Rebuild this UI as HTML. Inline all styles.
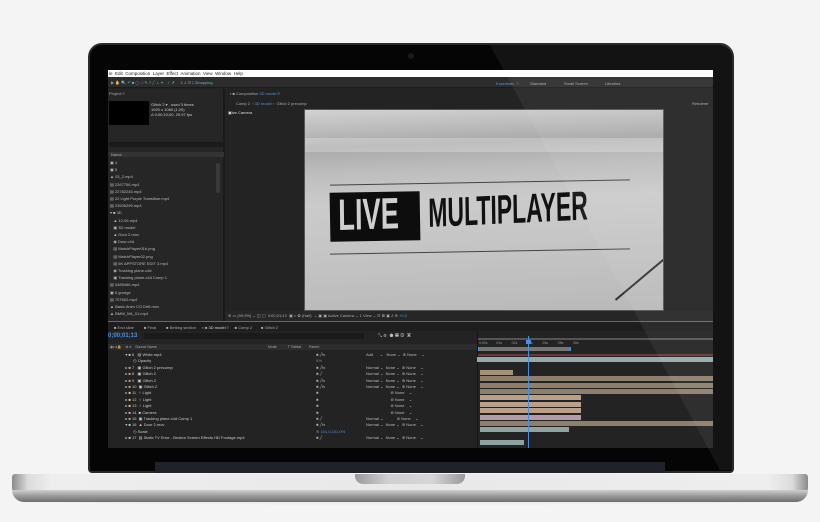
<!DOCTYPE html>
<html><head><meta charset="utf-8"><style>
*{margin:0;padding:0;box-sizing:border-box}
body{width:820px;height:522px;background:#f4f4f4;position:relative;overflow:hidden;font-family:"Liberation Sans",sans-serif}
.a{position:absolute}
.t{position:absolute;font-size:4px;color:#aaa;white-space:nowrap;line-height:5px}
.bar{position:absolute;height:5px}
</style></head><body>
<!-- base -->
<div class="a" style="left:40px;top:497px;width:740px;height:8px;background:linear-gradient(#ddd,#f2f2f2);border-radius:0 0 50% 50%"></div>
<div class="a" style="left:12px;top:474px;width:796px;height:27px;border-radius:3px 3px 14px 14px;background:linear-gradient(90deg,#8a8a8a 0,#dcdcdc 2%,#eee 5%,#e8e8e8 50%,#eee 95%,#dcdcdc 98%,#8a8a8a 100%)"></div>
<div class="a" style="left:12px;top:490px;width:796px;height:12px;border-radius:0 0 14px 14px;background:linear-gradient(#cfcfcf,#9a9a9a 50%,#6d6d6d)"></div>
<div class="a" style="left:355px;top:474px;width:110px;height:10px;border-radius:0 0 8px 8px;background:linear-gradient(90deg,#9a9a9a,#cfcfcf 30%,#d6d6d6 70%,#9a9a9a)"></div>
<!-- bezel -->
<div class="a" style="left:88px;top:43px;width:646px;height:430px;background:#050505;border-radius:14px 14px 4px 4px;border:2px solid #2a2a2a"></div>
<div class="a" style="left:155px;top:462px;width:510px;height:11px;background:#1f2228"></div>
<div class="a" style="left:408px;top:53px;width:6px;height:6px;border-radius:50%;background:#1a1a1a"></div>
<!-- screen -->
<div class="a" style="left:108px;top:70px;width:605px;height:378px;background:#232323;overflow:hidden">
 <div class="a" style="left:0;top:0;width:605px;height:7px;background:#fff"></div>
 <div class="t" style="left:1px;top:1px;color:#222;font-size:4.5px">le &nbsp;Edit &nbsp;Composition &nbsp;Layer &nbsp;Effect &nbsp;Animation &nbsp;View &nbsp;Window &nbsp;Help</div>
 <div class="a" style="left:0;top:7px;width:605px;height:11px;background:#2c2c2c;border-bottom:1px solid #1a1a1a"></div>
 <div class="t" style="left:3px;top:10px;color:#7ab">▶ ✋ 🔍 ↶ ■ ◻ &nbsp;□ ✎ T ╱ ⊥ ✦ &nbsp; ✓ ✗ &nbsp; &nbsp; ⅄ ⅄ ⊡ ☐Snapping</div>
 <div class="t" style="left:388px;top:11px;color:#5b8fd0">Essentials &nbsp;≡</div>
 <div class="t" style="left:422px;top:11px">Standard</div>
 <div class="t" style="left:456px;top:11px">Small Screen</div>
 <div class="t" style="left:497px;top:11px">Libraries</div>
 <div class="a" style="left:0;top:19px;width:117px;height:233px;background:#262626;border-right:2px solid #1a1a1a"></div>
 <div class="t" style="left:1px;top:21px">Project ≡</div>
 <div class="a" style="left:1px;top:31px;width:40px;height:24px;background:#000"></div>
 <div class="t" style="left:43px;top:32px;color:#ccc">Glitch 2 ▾ , used 3 times<br>1920 x 1080 (1,00)<br>Δ 0;00;10;00, 29,97 fps</div>
 <div class="a" style="left:1px;top:72px;width:114px;height:5px;background:#1b1b1b"></div>
 <div class="a" style="left:1px;top:82px;width:115px;height:5px;background:#333"></div>
 <div class="t" style="left:3px;top:82px">Name</div>
 <div class="t" style="left:2px;top:89px;line-height:7.2px;color:#bbb">
 ▣ 4<br>▣ 5<br>▲ 03_2.mp4<br>▤ 2267756.mp4<br>▤ 22782245.mp4<br>▤ 22 Light Purple Transition.mp4<br>▤ 23505299.mp4<br>▾ ■ 3D<br>&nbsp;&nbsp;&nbsp;▲ 12-06.mp4<br>&nbsp;&nbsp;&nbsp;▣ 3D model<br>&nbsp;&nbsp;&nbsp;▲ Door 2.mov<br>&nbsp;&nbsp;&nbsp;◉ Door.c4d<br>&nbsp;&nbsp;&nbsp;▤ MatchPlayer01b.png<br>&nbsp;&nbsp;&nbsp;▤ MatchPlayer02.png<br>&nbsp;&nbsp;&nbsp;▤ 6K APPSTORE EDIT 3.mp4<br>&nbsp;&nbsp;&nbsp;◉ Tracking plane.c4d<br>&nbsp;&nbsp;&nbsp;▣ Tracking plane.c4d Comp 1<br>▤ 0485466.mp4<br>▣ 6 grunge<br>▤ 707602.mp4<br>▲ Basic Anim CO Drift.mov<br>▲ BMW_M4_01.mp4</div>
 <div class="a" style="left:108px;top:93px;width:4px;height:30px;background:#3a3a3a;border-radius:2px"></div>
 <div class="t" style="left:122px;top:21px">▪ ■ Composition <span style="color:#5b8fd0">3D model</span> ≡</div>
 <div class="t" style="left:128px;top:31px">Comp 2 &nbsp;‹ <span style="color:#5b8fd0">3D model</span> ‹ &nbsp;Glitch 2 precomp</div>
 <div class="t" style="left:584px;top:31px">Renderer</div>
 <div class="t" style="left:120px;top:40px;color:#ddd">▣ive Camera</div>
 <div class="a" style="left:196px;top:39px;width:360px;height:202px;border:1px solid #555;background:linear-gradient(178deg,#d2d2d2 0,#a9a9a9 18%,#bdbdbd 30%,#cbcbcb 45%,#c4c4c4 70%,#b9b9b9 100%);overflow:hidden">
   <div class="a" style="left:0;top:28px;width:360px;height:14px;background:rgba(255,255,255,.25)"></div>
   <div class="a" style="left:25px;top:72px;width:300px;height:1px;background:#444;transform:rotate(-1deg)"></div>
   <div class="a" style="left:25px;top:141px;width:300px;height:1px;background:#444;transform:rotate(-1deg)"></div>
   <div class="a" style="left:25px;top:82px;width:90px;height:49px;background:#0d0d0d;transform:rotate(-1deg)"></div>
   <div class="a" style="left:33px;top:80px;font:bold 44px/52px 'Liberation Sans',sans-serif;color:#cfcfcf;transform:scaleX(.62) rotate(-1deg);transform-origin:left top">LIVE</div>
   <div class="a" style="left:123px;top:79px;font:bold 41px/48px 'Liberation Sans',sans-serif;color:#111;transform:scaleX(.56) rotate(-1.5deg);transform-origin:left top">MULTIPLAYER</div>
   <div class="a" style="left:300px;top:160px;width:90px;height:2px;background:#333;transform:rotate(-40deg)"></div>
 </div>
 <div class="a" style="left:117px;top:241px;width:488px;height:10px;background:#262626"></div>
 <div class="t" style="left:120px;top:243px">⊕ ▭ (99,9%) ⌄ ◫ ▢ &nbsp;0;00;01;13 &nbsp;▣ ◐ ✿ (Half) &nbsp;⌄ ▣ ▣ Active Camera ⌄ 1 View ⌄ ⊡ ⊠ ▣ ⅄ ⊕ <span style="color:#5b8fd0">+0,0</span></div>
 <div class="a" style="left:0;top:251px;width:605px;height:1px;background:#3b6fb0"></div>
 <div class="a" style="left:0;top:252px;width:605px;height:9px;background:#1e1e1e"></div>
 <div class="t" style="left:6px;top:255px">■ End slide &nbsp;&nbsp;&nbsp;&nbsp;&nbsp;&nbsp;&nbsp;&nbsp;■ Final &nbsp;&nbsp;&nbsp;&nbsp;&nbsp;&nbsp;&nbsp;&nbsp;■ Betting section &nbsp;&nbsp;&nbsp;&nbsp;× ■ <span style="color:#ddd">3D model</span> ≡ &nbsp;&nbsp;&nbsp;&nbsp;■ Comp 2 &nbsp;&nbsp;&nbsp;&nbsp;&nbsp;&nbsp;&nbsp;■ Glitch 2</div>
 <div class="a" style="left:0;top:261px;width:605px;height:187px;background:#232323"></div>
 <div class="t" style="left:0;top:263px;font-size:6px;line-height:6px;color:#4d8fe0;font-weight:bold">0;00;01;13</div>
 <div class="a" style="left:36px;top:263px;width:220px;height:6px;background:#1a1a1a"></div>
 <div class="t" style="left:270px;top:264px;color:#bbb;font-size:5px">⤡ ⊛ &nbsp;⬟ ▦ ◍ &nbsp;▣</div>
 <div class="a" style="left:0;top:274px;width:369px;height:6px;background:#2d2d2d"></div>
 <div class="t" style="left:2px;top:275px;font-size:3.5px">◉◐●🔒 &nbsp;&nbsp;&nbsp;⊛ # &nbsp;&nbsp;&nbsp;Source Name</div>
 <div class="t" style="left:160px;top:275px;font-size:3.5px">Mode &nbsp;&nbsp;&nbsp;&nbsp;&nbsp;&nbsp;&nbsp;&nbsp;&nbsp;&nbsp;T TrkMat &nbsp;&nbsp;&nbsp;&nbsp;&nbsp;&nbsp;&nbsp;Parent</div>
 <div class="t" style="left:4px;top:282px;line-height:6.4px;font-size:4px;color:#ccc">
 &nbsp;&nbsp;&nbsp;&nbsp;&nbsp;&nbsp;&nbsp;&nbsp;&nbsp;&nbsp;&nbsp;&nbsp;▾ <span style="color:#9cc">■</span> 6 &nbsp;&nbsp;▤ White.mp4<br>
 &nbsp;&nbsp;&nbsp;&nbsp;&nbsp;&nbsp;&nbsp;&nbsp;&nbsp;&nbsp;&nbsp;&nbsp;&nbsp;&nbsp;&nbsp;&nbsp;&nbsp;&nbsp;&nbsp;◷ Opacity<br>
 &nbsp;&nbsp;&nbsp;&nbsp;&nbsp;&nbsp;&nbsp;&nbsp;&nbsp;&nbsp;&nbsp;&nbsp;▸ <span style="color:#c9a77c">■</span> 7 &nbsp;&nbsp;▣ Glitch 2 precomp<br>
 &nbsp;&nbsp;&nbsp;&nbsp;&nbsp;&nbsp;&nbsp;&nbsp;&nbsp;&nbsp;&nbsp;&nbsp;▸ <span style="color:#c9a77c">■</span> 8 &nbsp;&nbsp;▣ Glitch 2<br>
 &nbsp;&nbsp;&nbsp;&nbsp;&nbsp;&nbsp;&nbsp;&nbsp;&nbsp;&nbsp;&nbsp;&nbsp;▸ <span style="color:#c9a77c">■</span> 9 &nbsp;&nbsp;▣ Glitch 2<br>
 &nbsp;&nbsp;&nbsp;&nbsp;&nbsp;&nbsp;&nbsp;&nbsp;&nbsp;&nbsp;&nbsp;&nbsp;▸ <span style="color:#c9a77c">■</span> 10 &nbsp;▣ Glitch 2<br>
 &nbsp;&nbsp;&nbsp;&nbsp;&nbsp;&nbsp;&nbsp;&nbsp;&nbsp;&nbsp;&nbsp;&nbsp;▸ <span style="color:#e8c39a">■</span> 11 &nbsp;♀ Light<br>
 &nbsp;&nbsp;&nbsp;&nbsp;&nbsp;&nbsp;&nbsp;&nbsp;&nbsp;&nbsp;&nbsp;&nbsp;▸ <span style="color:#e8c39a">■</span> 12 &nbsp;♀ Light<br>
 &nbsp;&nbsp;&nbsp;&nbsp;&nbsp;&nbsp;&nbsp;&nbsp;&nbsp;&nbsp;&nbsp;&nbsp;▸ <span style="color:#e8c39a">■</span> 13 &nbsp;♀ Light<br>
 &nbsp;&nbsp;&nbsp;&nbsp;&nbsp;&nbsp;&nbsp;&nbsp;&nbsp;&nbsp;&nbsp;&nbsp;▸ <span style="color:#d6a9c6">■</span> 14 &nbsp;■ Camera<br>
 &nbsp;&nbsp;&nbsp;&nbsp;&nbsp;&nbsp;&nbsp;&nbsp;&nbsp;&nbsp;&nbsp;&nbsp;▸ <span style="color:#c9a77c">■</span> 15 &nbsp;▣ Tracking plane.c4d Comp 1<br>
 &nbsp;&nbsp;&nbsp;&nbsp;&nbsp;&nbsp;&nbsp;&nbsp;&nbsp;&nbsp;&nbsp;&nbsp;▾ <span style="color:#9cc">■</span> 16 &nbsp;▲ Door 2.mov<br>
 &nbsp;&nbsp;&nbsp;&nbsp;&nbsp;&nbsp;&nbsp;&nbsp;&nbsp;&nbsp;&nbsp;&nbsp;&nbsp;&nbsp;&nbsp;&nbsp;&nbsp;&nbsp;&nbsp;◷ Scale<br>
 &nbsp;&nbsp;&nbsp;&nbsp;&nbsp;&nbsp;&nbsp;&nbsp;&nbsp;&nbsp;&nbsp;&nbsp;▸ <span style="color:#9cc">■</span> 17 &nbsp;▤ Static TV Error - Broken Screen Effects HD Footage.mp4</div>
 <div class="t" style="left:208px;top:282px;line-height:6.4px;color:#bbb">
 ♣ ╱fx<br><span style="color:#5b8fd0">0%</span><br>♣ ╱fx<br>♣ ╱<br>♣ ╱fx<br>♣ ╱fx<br>♣<br>♣<br>♣<br>♣<br>♣ ╱<br>♣ ╱fx<br><span style="color:#5b8fd0">⊕ 101,0,101,0%</span><br>♣ ╱</div>
 <div class="t" style="left:258px;top:282px;line-height:6.4px;color:#bbb">
 Add &nbsp;&nbsp;&nbsp;&nbsp;&nbsp;⌄ &nbsp;&nbsp;None ⌄ &nbsp;⊚ None &nbsp;&nbsp;&nbsp;⌄<br>&nbsp;<br>
 Normal ⌄ &nbsp;None ⌄ &nbsp;⊚ None &nbsp;&nbsp;&nbsp;⌄<br>Normal ⌄ &nbsp;None ⌄ &nbsp;⊚ None &nbsp;&nbsp;&nbsp;⌄<br>Normal ⌄ &nbsp;None ⌄ &nbsp;⊚ None &nbsp;&nbsp;&nbsp;⌄<br>Normal ⌄ &nbsp;None ⌄ &nbsp;⊚ None &nbsp;&nbsp;&nbsp;⌄<br>
 &nbsp;&nbsp;&nbsp;&nbsp;&nbsp;&nbsp;&nbsp;&nbsp;&nbsp;&nbsp;&nbsp;&nbsp;&nbsp;&nbsp;&nbsp;&nbsp;&nbsp;&nbsp;&nbsp;&nbsp;&nbsp;&nbsp;⊚ None &nbsp;&nbsp;&nbsp;⌄<br>&nbsp;&nbsp;&nbsp;&nbsp;&nbsp;&nbsp;&nbsp;&nbsp;&nbsp;&nbsp;&nbsp;&nbsp;&nbsp;&nbsp;&nbsp;&nbsp;&nbsp;&nbsp;&nbsp;&nbsp;&nbsp;&nbsp;⊚ None &nbsp;&nbsp;&nbsp;⌄<br>&nbsp;&nbsp;&nbsp;&nbsp;&nbsp;&nbsp;&nbsp;&nbsp;&nbsp;&nbsp;&nbsp;&nbsp;&nbsp;&nbsp;&nbsp;&nbsp;&nbsp;&nbsp;&nbsp;&nbsp;&nbsp;&nbsp;⊚ None &nbsp;&nbsp;&nbsp;⌄<br>&nbsp;&nbsp;&nbsp;&nbsp;&nbsp;&nbsp;&nbsp;&nbsp;&nbsp;&nbsp;&nbsp;&nbsp;&nbsp;&nbsp;&nbsp;&nbsp;&nbsp;&nbsp;&nbsp;&nbsp;&nbsp;&nbsp;⊚ None &nbsp;&nbsp;&nbsp;⌄<br>
 Normal ⌄ &nbsp;&nbsp;&nbsp;&nbsp;&nbsp;&nbsp;&nbsp;&nbsp;&nbsp;&nbsp;&nbsp;⊚ None &nbsp;&nbsp;&nbsp;⌄<br>Normal ⌄ &nbsp;None ⌄ &nbsp;⊚ None &nbsp;&nbsp;&nbsp;⌄<br>&nbsp;<br>Normal ⌄ &nbsp;None ⌄ &nbsp;⊚ None &nbsp;&nbsp;&nbsp;⌄</div>
 <div class="a" style="left:369px;top:261px;width:1px;height:187px;background:#151515"></div>
 <div class="a" style="left:370px;top:268px;width:235px;height:2px;background:#555"></div>
 <div class="t" style="left:371px;top:271px;font-size:3.5px;color:#999">0:00s &nbsp;&nbsp;&nbsp;&nbsp;&nbsp;&nbsp;&nbsp;&nbsp;01s &nbsp;&nbsp;&nbsp;&nbsp;&nbsp;&nbsp;&nbsp;&nbsp;&nbsp;02s &nbsp;&nbsp;&nbsp;&nbsp;&nbsp;&nbsp;&nbsp;&nbsp;&nbsp;03s &nbsp;&nbsp;&nbsp;&nbsp;&nbsp;&nbsp;&nbsp;&nbsp;&nbsp;04s &nbsp;&nbsp;&nbsp;&nbsp;&nbsp;&nbsp;&nbsp;&nbsp;&nbsp;05s &nbsp;&nbsp;&nbsp;&nbsp;&nbsp;&nbsp;&nbsp;&nbsp;&nbsp;06s</div>
 <div class="a" style="left:370px;top:277px;width:93px;height:4px;background:#777;border-left:1px solid #4a90e2;border-right:1px solid #4a90e2"></div>
 <div class="a" style="left:370px;top:284px;width:235px;height:2px;background:#6b3838"></div>
 <div class="bar" style="left:369px;top:287px;width:236px;background:#95aaa8"></div>
 <div class="bar" style="left:372px;top:300px;width:33px;background:#a3917a"></div>
 <div class="bar" style="left:372px;top:306px;width:233px;background:#8d7f6c"></div>
 <div class="bar" style="left:372px;top:313px;width:233px;background:#8d7f6c"></div>
 <div class="bar" style="left:372px;top:319px;width:233px;background:#8d7f6c"></div>
 <div class="bar" style="left:372px;top:325px;width:101px;background:#b9a08a"></div>
 <div class="bar" style="left:372px;top:332px;width:101px;background:#b9a08a"></div>
 <div class="bar" style="left:372px;top:338px;width:101px;background:#b9a08a"></div>
 <div class="bar" style="left:372px;top:345px;width:101px;background:#b59aaa"></div>
 <div class="bar" style="left:372px;top:351px;width:233px;background:#8d7f6c"></div>
 <div class="bar" style="left:372px;top:357px;width:89px;background:#8fa3a1"></div>
 <div class="bar" style="left:372px;top:370px;width:44px;background:#8fa3a1"></div>
 <div class="a" style="left:420px;top:266px;width:1px;height:112px;background:#4a90e2"></div>
 <div class="a" style="left:418px;top:270px;width:5px;height:4px;background:#4a90e2"></div>
</div>
<!-- glare -->
<div class="a" style="left:490px;top:45px;width:242px;height:425px;background:rgba(255,255,255,.06);clip-path:polygon(0 0,100% 0,100% 100%,95% 100%)"></div>
</body></html>
